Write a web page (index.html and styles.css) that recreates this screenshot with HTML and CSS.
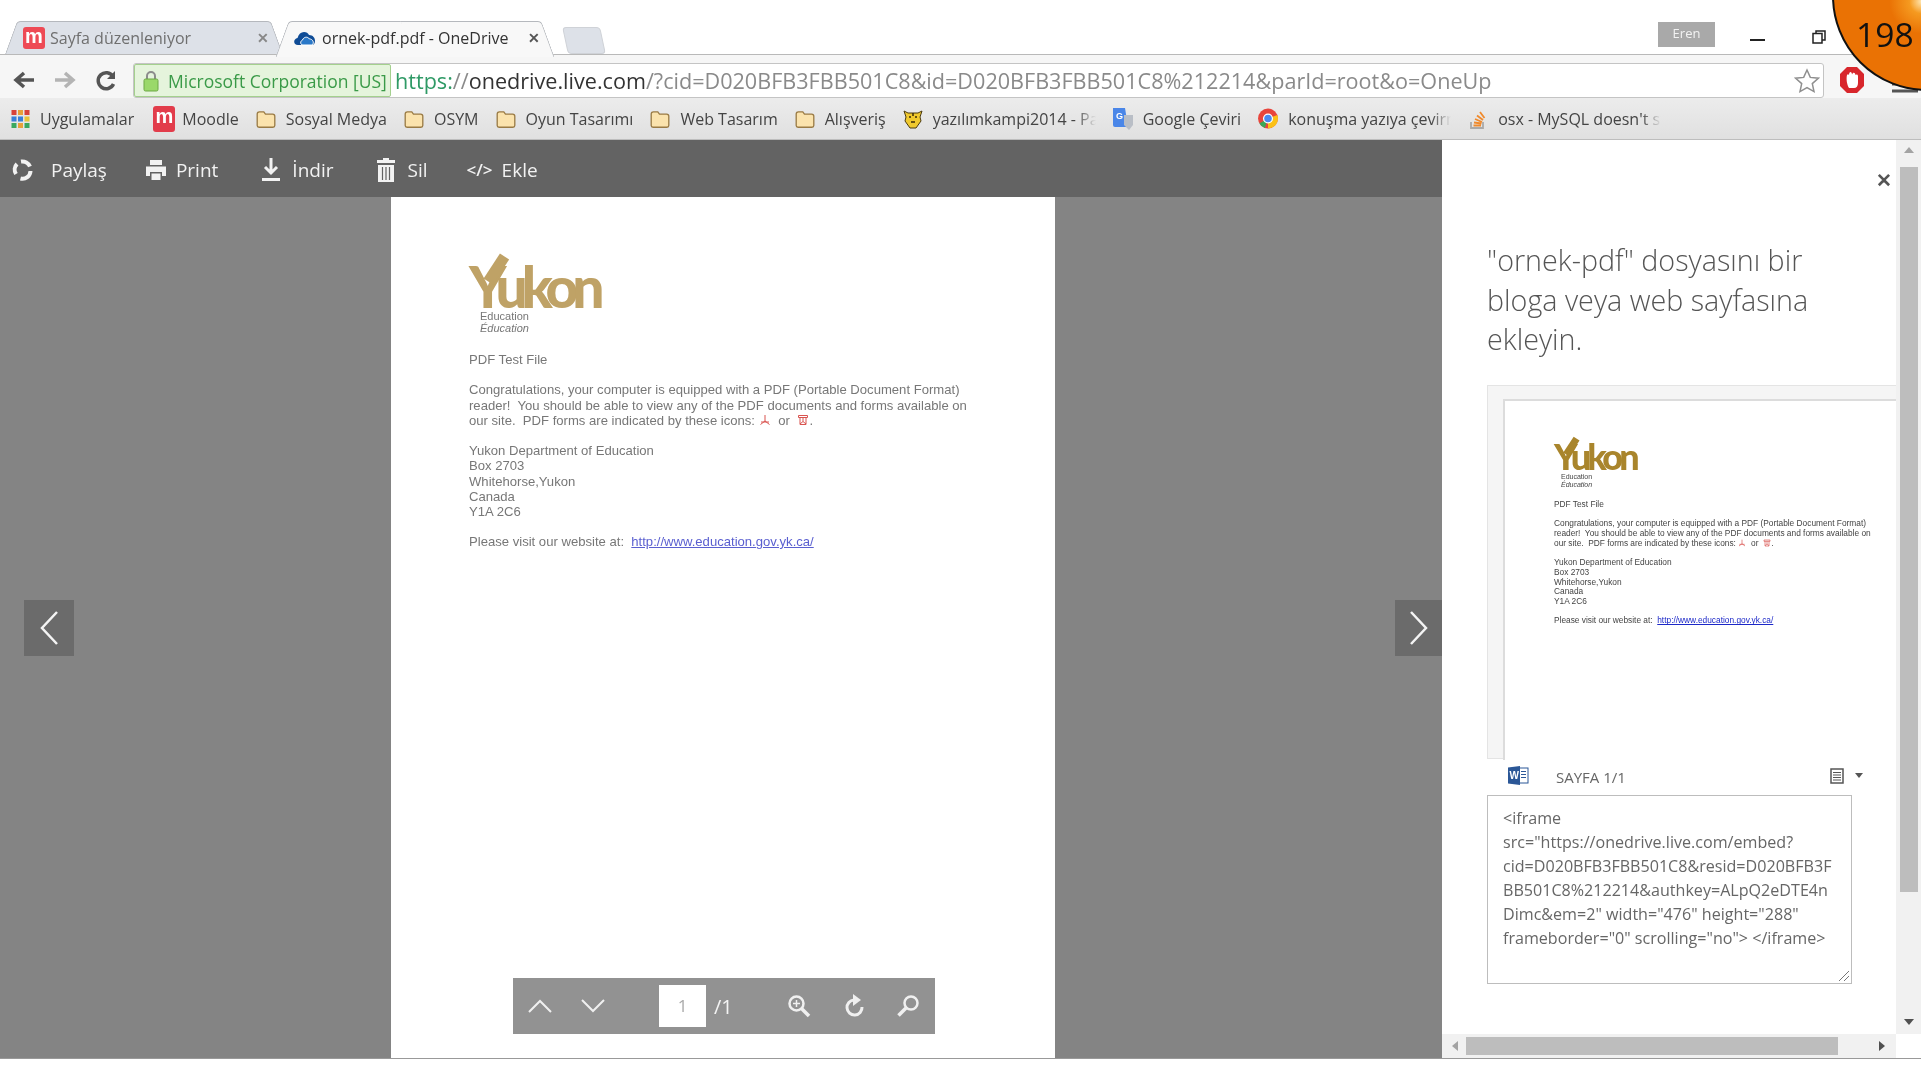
FILE: index.html
```html
<!DOCTYPE html>
<html lang="tr">
  <head>
    <meta charset="utf-8">
    <title>ornek-pdf.pdf - OneDrive</title>
    <link rel="stylesheet" href="styles.css">
  </head>
  <body>
    <svg class="defs" width="0" height="0">
      <symbol id="folder" viewBox="0 0 20 20">
        <path d="M2 5.500C2 4 3 3.500 4 3.500h4l1.500 2H16c1.200 0 2 .8 2 2V16c0 1-.8 1.500-1.700 1.500H3.700C2.800 17.500 2 17 2 16z" fill="#fbe3ad" stroke="#9a7b45" stroke-width="1.200"/>
      </symbol>
      <symbol id="yukon-pdf" viewBox="0 0 12 12">
        <path d="M6 1v6L1.500 10.500M6 7l4.500 3.500M2 8h8" fill="none" stroke="#d9534f" stroke-width="1"/>
      </symbol>
      <symbol id="form-pdf" viewBox="0 0 12 12">
        <path d="M1.500 1.500h9v2h-9zM3 3.500v7h6v-7M6 3.500v4L3 10M6 7.500l3 2.500" fill="none" stroke="#d9534f" stroke-width="1"/>
      </symbol>
    </svg>

    <div class="tabstrip">
      <div class="tab">
        <span class="fav-m">m</span>
        <span class="tab-title">Sayfa düzenleniyor</span>
        <span class="tab-x">✕</span>
      </div>
      <div class="tab tab-on">
        <svg class="tab-ico" width="22" height="16" viewBox="0 0 22 16"><path d="M4 15c-5 0-5-6-.5-7C4.500 4 7 2 10 2c2.500 0 4 1 5 3 4 0 6 3 6 6 0 2-1 4-3 4z" fill="#0f4c96"/><path d="M9 15c-3 0-3-4-.5-5 1-3 5-4 7-1 3 0 5 3 3 6z" fill="#2a78c8" stroke="#fff" stroke-width="1"/></svg>
        <span class="tab-title">ornek-pdf.pdf - OneDrive</span>
        <span class="tab-x">✕</span>
      </div>
      <div class="tab-new"></div>
      <div class="winctl">
        <span class="user">Eren</span>
        <span class="win-min"></span>
        <svg class="win-max" width="14" height="14" viewBox="0 0 14 14"><path d="M4 3V1h9v9h-3M1 3.500h9v9.500H1z" fill="none" stroke="#222" stroke-width="1.500"/></svg>
      </div>
    </div>

    <div class="toolbar">
      <svg class="nav-ico" width="24" height="22" viewBox="0 0 24 22"><path d="M22 11H6M12 4l-8 7 8 7" fill="none" stroke="#555" stroke-width="3.500"/></svg>
      <svg class="nav-ico" width="24" height="22" viewBox="0 0 24 22"><path d="M2 11h16M12 4l8 7-8 7" fill="none" stroke="#b4b4b4" stroke-width="3.500"/></svg>
      <svg class="nav-ico" width="24" height="24" viewBox="0 0 24 24"><path d="M19.500 15a8 8 0 1 1-.5-7.500" fill="none" stroke="#555" stroke-width="3.500"/><path d="M21 2v8h-8z" fill="#555"/></svg>
      <div class="omnibox">
        <div class="ev-chip">
          <svg width="16" height="22" viewBox="0 0 16 22"><path d="M4 10V6a4 4 0 0 1 8 0v4" fill="none" stroke="#8c8c8c" stroke-width="2"/><rect x="1" y="9" width="14" height="12" rx="1.500" fill="#9ad86a" stroke="#6da844"/></svg>
          <span>Microsoft Corporation [US]</span>
        </div>
        <div class="url"><span class="url-s">https:</span><span class="url-p">//</span><span class="url-h">onedrive.live.com</span><span class="url-p">/?cid=D020BFB3FBB501C8&amp;id=D020BFB3FBB501C8%212214&amp;parId=root&amp;o=OneUp</span></div>
        <svg class="star" width="26" height="26" viewBox="0 0 26 26"><path d="M13 2l3.300 7.400 8 .8-6 5.400 1.700 8L13 19.500 6 23.600l1.700-8-6-5.400 8-.8z" fill="#fff" stroke="#8f8f8f" stroke-width="1.500"/></svg>
      </div>
      <svg class="stop" width="26" height="28" viewBox="0 0 26 28"><path d="M8 1h10l7 7v12l-7 7H8l-7-7V8z" fill="#d8262c"/><path d="M10 22c-2-3-3-9-2-13 .5-1 1.500-1 2 0 0-4 3-4 3-.5 1-3 3.500-2 3.500 .5 1-1 2.500-.5 2.500 1V17c0 3-1.500 5-4 5z" fill="#fff"/></svg>
      <svg class="burger" width="26" height="20" viewBox="0 0 26 20"><path d="M0 3h26M0 10h26M0 17h26" stroke="#555" stroke-width="3"/></svg>
    </div>

    <div class="bookmarks">
      <span class="bm">
        <svg width="21" height="20" viewBox="0 0 20 20"><rect x="1" y="1" width="5" height="5" fill="#d8433a"/><rect x="7.500" y="1" width="5" height="5" fill="#e8a13a"/><rect x="14" y="1" width="5" height="5" fill="#d8433a"/><rect x="1" y="7.500" width="5" height="5" fill="#3a7fd8"/><rect x="7.500" y="7.500" width="5" height="5" fill="#3a7fd8"/><rect x="14" y="7.500" width="5" height="5" fill="#e8c33a"/><rect x="1" y="14" width="5" height="5" fill="#3aa860"/><rect x="7.500" y="14" width="5" height="5" fill="#e8a13a"/><rect x="14" y="14" width="5" height="5" fill="#3aa860"/></svg>
        Uygulamalar
      </span>
      <span class="bm bm-moodle"><span class="fav-m fav-big">m</span>Moodle</span>
      <span class="bm"><svg width="22" height="22"><use href="#folder"/></svg>Sosyal Medya</span>
      <span class="bm"><svg width="22" height="22"><use href="#folder"/></svg>OSYM</span>
      <span class="bm"><svg width="22" height="22"><use href="#folder"/></svg>Oyun Tasarımı</span>
      <span class="bm"><svg width="22" height="22"><use href="#folder"/></svg>Web Tasarım</span>
      <span class="bm"><svg width="22" height="22"><use href="#folder"/></svg>Alışveriş</span>
      <span class="bm">
        <svg width="22" height="20" viewBox="0 0 20 20"><path d="M1 2l4 2h10l4-2-2 6 1 4-5 7H7l-5-7 1-4z" fill="#f0c92e" stroke="#4a3a10"/><path d="M6 8h2M12 8h2M8 13h4M10 4v3" stroke="#3a2a08" stroke-width="1.500"/></svg>
        <span class="bm-cut">yazılımkampi2014 - Pardus</span>
      </span>
      <span class="bm">
        <svg width="22" height="24" viewBox="0 0 22 24"><path d="M1 1h12l3 19H3a2 2 0 0 1-2-2z" fill="#4a86e8"/><path d="M12 8h9v10l-4 5-5-5z" fill="#b9bec6"/><text x="4" y="12" font-size="9" font-weight="700" fill="#fff" font-family="Liberation Sans, sans-serif">G</text></svg>
        Google Çeviri
      </span>
      <span class="bm">
        <svg width="22" height="21" viewBox="0 0 20 20"><circle cx="10" cy="10" r="9.500" fill="#e8453c"/><path d="M10 10l8.900-3.300a9.500 9.500 0 0 1-8.900 12.800z" fill="#fbc116"/><path d="M10 10L1.800 14.800A9.500 9.500 0 0 0 7 19z" fill="#3aa757"/><circle cx="10" cy="10" r="4.800" fill="#fff"/><circle cx="10" cy="10" r="3.600" fill="#4a8af0"/></svg>
        <span class="bm-cut">konuşma yazıya çevirme</span>
      </span>
      <span class="bm">
        <svg width="22" height="24" viewBox="0 0 20 24"><path d="M3 15v6h12v-6" fill="none" stroke="#a9a9a9" stroke-width="1.800"/><path d="M5.500 18.500h7.500M6 15.500l7.500 1M7 12l7 3M9 8.500l6 4.500M12 5l4.500 6" fill="none" stroke="#f08a2c" stroke-width="1.800"/></svg>
        <span class="bm-cut">osx - MySQL doesn't start</span>
      </span>
    </div>

    <div class="app">
      <div class="viewer">
        <div class="actions">
          <span class="act act-share">
            <svg width="24" height="24" viewBox="0 0 24 24"><path d="M5 16a8 8 0 0 1 1-10M10 3.500a8.500 8.500 0 0 1 9 5M19.500 13a8 8 0 0 1-10 7.500" fill="none" stroke="#f2f2f2" stroke-width="4"/></svg>
            Paylaş
          </span>
          <span class="act act-print">
            <svg width="24" height="24" viewBox="0 0 24 24"><path d="M6 2h12v5H6zM2 8.500h20V18h-4v-4H6v4H2zM7.500 15.500h9V22h-9z" fill="#f2f2f2"/></svg>
            Print
          </span>
          <span class="act act-down">
            <svg width="22" height="26" viewBox="0 0 22 26"><path d="M11 1v14M5 10l6 6 6-6" fill="none" stroke="#f2f2f2" stroke-width="3"/><path d="M2 21h18v3H2z" fill="#f2f2f2"/></svg>
            İndir
          </span>
          <span class="act act-del">
            <svg width="20" height="26" viewBox="0 0 20 26"><path d="M7 1h6v2h6v3H1V3h6zM2 8h16v17H2z" fill="#f2f2f2"/><path d="M6.500 10v13M10 10v13M13.500 10v13" stroke="#636363" stroke-width="1.200"/></svg>
            Sil
          </span>
          <span class="act act-embed"><b class="code-tag">&lt;/&gt;</b>Ekle</span>
        </div>
        <div class="stage">
          <div class="sheet">
            <div class="doc doc-big">
              <div class="logo"><span class="logo-mark">Yukon</span></div>
              <p class="logo-sub">Education<br><i>Éducation</i></p>
              <p>PDF Test File</p>
              <p>Congratulations, your computer is equipped with a PDF (Portable Document Format)<br>reader!&nbsp; You should be able to view any of the PDF documents and forms available on<br>our site.&nbsp; PDF forms are indicated by these icons: <svg class="pdf-ico"><use href="#yukon-pdf"/></svg> or <svg class="pdf-ico"><use href="#form-pdf"/></svg>.</p>
              <p>Yukon Department of Education<br>Box 2703<br>Whitehorse,Yukon<br>Canada<br>Y1A 2C6</p>
              <p>Please visit our website at:&nbsp; <a>http://www.education.gov.yk.ca/</a></p>
            </div>
          </div>
          <div class="flip flip-prev"><svg width="20" height="36" viewBox="0 0 20 36"><path d="M18 2L3 18l15 16" fill="none" stroke="#f4f4f4" stroke-width="2.500"/></svg></div>
          <div class="flip flip-next"><svg width="20" height="36" viewBox="0 0 20 36"><path d="M2 2l15 16L2 34" fill="none" stroke="#f4f4f4" stroke-width="2.500"/></svg></div>
          <div class="pager">
            <svg class="pg-up" width="24" height="14" viewBox="0 0 24 14"><path d="M1 13L12 2l11 11" fill="none" stroke="#f0f0f0" stroke-width="2"/></svg>
            <svg class="pg-down" width="24" height="14" viewBox="0 0 24 14"><path d="M1 1l11 11L23 1" fill="none" stroke="#f0f0f0" stroke-width="2"/></svg>
            <span class="pg-num">1</span>
            <span class="pg-total">/1</span>
            <svg class="pg-zoom" width="24" height="24" viewBox="0 0 24 24"><circle cx="9.500" cy="9.500" r="7" fill="none" stroke="#f0f0f0" stroke-width="2.500"/><path d="M14.500 14.500L22 22" stroke="#f0f0f0" stroke-width="3.500"/><path d="M6 9.500h7M9.500 6v7" stroke="#f0f0f0" stroke-width="1.500"/></svg>
            <svg class="pg-rot" width="22" height="24" viewBox="0 0 22 24"><path d="M18 13A7.500 7.500 0 1 1 10 6" fill="none" stroke="#f0f0f0" stroke-width="3"/><path d="M9 0l8 6-8 6z" fill="#f0f0f0"/></svg>
            <svg class="pg-find" width="24" height="24" viewBox="0 0 24 24"><circle cx="15" cy="9" r="6.500" fill="none" stroke="#f0f0f0" stroke-width="2.500"/><path d="M10 14l-7.500 7.500" stroke="#f0f0f0" stroke-width="3.500"/></svg>
          </div>
        </div>
      </div>

      <div class="panel">
        <div class="panel-main">
          <div class="panel-close">✕</div>
          <h2 class="panel-title">"ornek-pdf" dosyasını bir bloga veya web sayfasına ekleyin.</h2>
          <div class="preview">
            <div class="preview-page">
              <div class="doc doc-small">
                <div class="logo"><span class="logo-mark">Yukon</span></div>
                <p class="logo-sub">Education<br><i>Éducation</i></p>
                <p>PDF Test File</p>
                <p>Congratulations, your computer is equipped with a PDF (Portable Document Format)<br>reader!&nbsp; You should be able to view any of the PDF documents and forms available on<br>our site.&nbsp; PDF forms are indicated by these icons: <svg class="pdf-ico"><use href="#yukon-pdf"/></svg> or <svg class="pdf-ico"><use href="#form-pdf"/></svg>.</p>
                <p>Yukon Department of Education<br>Box 2703<br>Whitehorse,Yukon<br>Canada<br>Y1A 2C6</p>
                <p>Please visit our website at:&nbsp; <a>http://www.education.gov.yk.ca/</a></p>
              </div>
            </div>
          </div>
          <div class="preview-bar">
            <svg class="word" width="21" height="19" viewBox="0 0 21 19"><rect x="7" y="2" width="13" height="15" fill="#fff" stroke="#2b5797"/><path d="M13 5.500h5M13 8.500h5M13 11.500h5" stroke="#2b5797"/><path d="M0 1.500L12 0v19L0 17.500z" fill="#2b5797"/><text x="1.500" y="13" font-size="10" font-weight="700" fill="#fff" font-family="Liberation Sans, sans-serif">W</text></svg>
            <span class="page-label">SAYFA 1/1</span>
            <svg class="page-mode" width="14" height="16" viewBox="0 0 14 16"><rect x="1" y="1" width="12" height="14" fill="none" stroke="#555" stroke-width="1.500"/><path d="M3 4.500h8M3 7h8M3 9.500h8M3 12h8" stroke="#555" stroke-width="1.200"/></svg>
            <span class="caret"></span>
          </div>
          <div class="embed-box">
            <div class="embed-code">&lt;iframe<br>src="https://onedrive.live.com/embed?<br>cid=D020BFB3FBB501C8&amp;resid=D020BFB3F<br>BB501C8%212214&amp;authkey=ALpQ2eDTE4n<br>Dimc&amp;em=2" width="476" height="288"<br>frameborder="0" scrolling="no"&gt; &lt;/iframe&gt;</div>
            <svg class="grip" width="12" height="12" viewBox="0 0 12 12"><path d="M11 1L1 11M11 6l-5 5" stroke="#777"/></svg>
          </div>
        </div>
        <div class="vscroll">
          <span class="arrow arrow-up"></span>
          <span class="vthumb"></span>
          <span class="arrow arrow-down"></span>
        </div>
        <div class="hscroll">
          <span class="arrow arrow-left"></span>
          <span class="hthumb"></span>
          <span class="arrow arrow-right"></span>
        </div>
      </div>
    </div>

    <div class="badge">198</div>
  </body>
</html>
```
FILE: styles.css
```css
html, body {
    margin: 0;
    padding: 0;
    background: #fff;
}

body {
    position: relative;
    width: 1921px;
    height: 1080px;
    overflow: hidden;
    font-family: "Open Sans", "Noto Sans", sans-serif;
    color: #333;
    filter: blur(0.55px);
}

.defs {
    position: absolute;
}

svg {
    flex: none;
    display: block;
}

/* tabs */

.tabstrip {
    height: 55px;
    box-sizing: border-box;
    padding: 21px 0 0 17px;
    display: flex;
    align-items: stretch;
    gap: 17px;
    border-bottom: 1px solid #b9b9b9;
}

.tab {
    position: relative;
    width: 254px;
    box-sizing: border-box;
    padding: 0 2px 0 6px;
    display: flex;
    align-items: center;
    font-size: 16px;
    color: #6f6f6f;
    z-index: 0;
}

.tab::before, .tab::after {
    content: "";
    position: absolute;
    top: 0;
    bottom: 0;
    width: 55%;
    background: #dde1e8;
    border: 1px solid #b5b8bd;
    border-bottom: 0;
    z-index: -1;
}

.tab::before {
    left: -6px;
    border-right: 0;
    border-top-left-radius: 4px;
    transform: skewX(-20deg);
}

.tab::after {
    right: -6px;
    border-left: 0;
    border-top-right-radius: 4px;
    transform: skewX(20deg);
}

.tab-on {
    color: #333;
    padding-left: 6px;
}

.tab-on::before, .tab-on::after {
    background: #f8f8f8;
    height: 35px;
}

.tab-ico {
    margin-right: 6px;
}

.tab-title {
    flex: 1;
    white-space: nowrap;
}

.tab-x {
    font-size: 14px;
    font-weight: 700;
    color: #888;
}

.tab-on .tab-x {
    color: #555;
}

.fav-m {
    width: 22px;
    height: 22px;
    margin-right: 5px;
    border-radius: 3px;
    background: #ee4a55;
    color: #fff;
    font-family: "Liberation Sans", sans-serif;
    font-size: 20px;
    font-weight: 700;
    line-height: 18px;
    text-align: center;
    flex: none;
}

.fav-big {
    height: 26px;
    line-height: 21px;
    margin-right: 7px;
    background: #e23c4b;
}

.tab-new {
    width: 36px;
    height: 25px;
    margin: 6px 0 0 6px;
    background: #dde1e8;
    border: 1px solid #cfd2d7;
    border-radius: 4px;
    transform: skewX(12deg);
}

.winctl {
    margin-left: auto;
    display: flex;
    align-items: flex-start;
}

.user {
    width: 57px;
    height: 25px;
    margin-top: 1px;
    background: #a9a9a9;
    color: #f2f2f2;
    font-size: 13px;
    line-height: 22px;
    text-align: center;
}

.win-min {
    width: 15px;
    height: 2px;
    margin: 18px 0 0 35px;
    background: #222;
}

.win-max {
    margin: 9px 95px 0 47px;
}

/* toolbar */

.toolbar {
    height: 43px;
    box-sizing: border-box;
    padding: 8px 0 0 12px;
    display: flex;
    align-items: flex-start;
    background: #f6f6f6;
}

.nav-ico {
    margin: 6px 17px 0 0;
}

.omnibox {
    width: 1691px;
    height: 35px;
    margin-left: -2px;
    box-sizing: border-box;
    display: flex;
    align-items: center;
    background: #fff;
    border: 1px solid #c4c4c4;
    border-radius: 3px;
}

.ev-chip {
    width: 257px;
    height: 33px;
    box-sizing: border-box;
    padding-left: 8px;
    display: flex;
    align-items: center;
    gap: 9px;
    background: #e5f4dc;
    border: 1px solid #a4d08e;
    border-radius: 2px;
    color: #3a9a48;
    font-size: 17.500px;
    white-space: nowrap;
}

.url {
    margin-left: 4px;
    flex: 1;
    font-size: 21.600px;
    color: #8a8a8a;
    white-space: nowrap;
}

.url-s {
    color: #2f9a66;
}

.url-h {
    color: #333;
}

.star {
    margin-right: 3px;
}

.stop {
    margin: 3px 0 0 15px;
}

.burger {
    margin: 11px 0 0 27px;
}

/* bookmarks */

.bookmarks {
    height: 42px;
    box-sizing: border-box;
    padding: 0 0 0 10px;
    display: flex;
    align-items: center;
    gap: 16px;
    background: linear-gradient(#ececec, #e0e0e0);
    border-bottom: 1px solid #bdbdbd;
    font-size: 16px;
    color: #444;
    white-space: nowrap;
}

.bm {
    display: flex;
    align-items: center;
    gap: 9px;
}

.bm-moodle {
    gap: 0;
    margin-left: 3px;
}

.bm-cut {
    display: block;
    width: 163px;
    overflow: hidden;
    -webkit-mask-image: linear-gradient(to right, #000 88%, transparent);
    mask-image: linear-gradient(to right, #000 88%, transparent);
}

/* main area */

.app {
    display: flex;
    height: 918px;
    border-bottom: 1px solid #999;
}

.viewer {
    width: 1442px;
    display: flex;
    flex-direction: column;
}

.actions {
    height: 57px;
    flex: none;
    box-sizing: border-box;
    padding-top: 2px;
    display: flex;
    align-items: center;
    background: #636363;
    color: #f2f2f2;
    font-size: 19px;
}

.act {
    display: flex;
    align-items: center;
}

.act-share {
    margin-left: 11px;
    gap: 16px;
}

.act-print {
    margin-left: 37px;
    gap: 8px;
}

.act-down {
    margin-left: 42px;
    gap: 10px;
}

.act-del {
    margin-left: 42px;
    gap: 12px;
}

.act-embed {
    margin-left: 39px;
    gap: 9px;
}

.code-tag {
    font-size: 17px;
    font-weight: 600;
}

.stage {
    position: relative;
    flex: 1;
    padding-left: 391px;
    background: #848484;
}

.sheet {
    width: 664px;
    height: 100%;
    background: #fff;
}

.doc {
    font-family: "Liberation Sans", sans-serif;
    white-space: nowrap;
}

.doc p {
    margin: 0;
}

.doc a {
    text-decoration: underline;
}

.doc-big {
    padding: 61px 0 0 78px;
    font-size: 13.100px;
    line-height: 15.200px;
    color: #777;
}

.doc-big p {
    margin-bottom: 15.200px;
}

.doc-big a {
    color: #5a5fd0;
}

.doc-big .logo {
    height: 52px;
}

.doc-big .logo-mark {
    font-size: 57px;
    line-height: 56px;
    letter-spacing: -6px;
    color: #bfa266;
}

.doc-big .logo-sub {
    margin: 0 0 18px 11px;
    font-size: 11px;
    line-height: 12px;
}

.doc-big .pdf-ico {
    width: 12px;
    height: 12px;
}

.doc-small {
    padding: 39px 0 0 49px;
    font-size: 8.330px;
    line-height: 9.700px;
    color: #444;
}

.doc-small p {
    margin-bottom: 9.700px;
}

.doc-small a {
    color: #1c28c8;
}

.doc-small .logo {
    height: 33px;
}

.doc-small .logo-mark {
    font-size: 36px;
    line-height: 33px;
    letter-spacing: -3.800px;
    color: #a9852c;
}

.doc-small .logo-sub {
    margin: 0 0 12px 7px;
    font-size: 7px;
    line-height: 7.500px;
}

.doc-small .pdf-ico {
    width: 8px;
    height: 8px;
}

.logo-mark {
    position: relative;
    display: block;
    font-family: Lato, sans-serif;
    font-weight: 900;
}

/* long arm of the Y */
.logo-mark::after {
    content: "";
    position: absolute;
    left: 0.39em;
    top: -0.07em;
    width: 0.19em;
    height: 0.52em;
    background: currentColor;
    transform: rotate(33deg);
}

.pdf-ico {
    display: inline-block;
    vertical-align: -1px;
    margin: 0 0.3em 0 0;
}

.pdf-ico + .pdf-ico {
    margin: 0 0 0 0.3em;
}

.flip {
    position: absolute;
    top: 403px;
    width: 50px;
    height: 56px;
    display: flex;
    align-items: center;
    justify-content: center;
    background: #6b6b6b;
}

.flip-prev {
    left: 24px;
}

.flip-next {
    right: 0;
    width: 47px;
}

.pager {
    position: absolute;
    left: 513px;
    top: 781px;
    width: 422px;
    height: 56px;
    display: flex;
    align-items: center;
    background: #929292;
    color: #f4f4f4;
}

.pg-up {
    margin-left: 15px;
}

.pg-down {
    margin-left: 29px;
}

.pg-num {
    width: 47px;
    height: 42px;
    margin-left: 54px;
    background: #fff;
    color: #aaa;
    font-size: 17px;
    line-height: 42px;
    text-align: center;
}

.pg-total {
    margin-left: 8px;
    font-size: 20px;
}

.pg-zoom {
    margin-left: 54px;
}

.pg-rot {
    margin-left: 33px;
}

.pg-find {
    margin-left: 30px;
}

/* embed panel */

.panel {
    width: 479px;
    display: grid;
    grid-template-columns: 454px 25px;
    grid-template-rows: 1fr 24px;
}

.panel-main {
    position: relative;
    padding: 0 0 0 45px;
    overflow: hidden;
}

.panel-close {
    position: absolute;
    right: 4px;
    top: 27px;
    font-size: 19px;
    font-weight: 700;
    color: #555;
}

.panel-title {
    width: 345px;
    height: 245px;
    margin: 0;
    box-sizing: border-box;
    padding-top: 100px;
    font-size: 28.700px;
    font-weight: 300;
    line-height: 39.500px;
    color: #555;
}

.preview {
    width: 409px;
    height: 374px;
    box-sizing: border-box;
    padding: 13px 0 0 15px;
    background: #f5f5f5;
    border: 1px solid #e4e4e4;
    border-right: 0;
}

.preview-page {
    height: 100%;
    background: #fff;
    border: 2px solid #dcdcdc;
    border-width: 2px 0 0 2px;
}

.preview-bar {
    width: 409px;
    height: 36px;
    box-sizing: border-box;
    display: flex;
    align-items: center;
    padding: 0 33px 0 21px;
}

.word {
    margin-bottom: 3px;
}

.page-label {
    margin-left: 27px;
    font-size: 15px;
    color: #666;
    white-space: nowrap;
}

.page-mode {
    margin: 0 0 3px auto;
}

.caret {
    width: 0;
    height: 0;
    margin: 0 0 3px 11px;
    border: 4px solid transparent;
    border-top: 5px solid #555;
    border-bottom: 0;
}

.embed-box {
    position: relative;
    width: 365px;
    height: 189px;
    box-sizing: border-box;
    padding: 10px 0 0 15px;
    border: 1px solid #bdbdbd;
}

.embed-code {
    font-size: 16.100px;
    line-height: 24px;
    color: #666;
    white-space: nowrap;
}

.grip {
    position: absolute;
    right: 1px;
    bottom: 1px;
}

.vscroll {
    display: flex;
    flex-direction: column;
    align-items: center;
    background: #f1f1f1;
}

.vthumb {
    width: 18px;
    height: 725px;
    margin-top: 14px;
    background: #bdbdbd;
}

.arrow {
    width: 0;
    height: 0;
    border: 5px solid transparent;
    flex: none;
}

.arrow-up {
    margin-top: 7px;
    border-top: 0;
    border-bottom: 6px solid #a3a3a3;
}

.arrow-down {
    margin-top: auto;
    margin-bottom: 9px;
    border-bottom: 0;
    border-top: 6px solid #505050;
}

.hscroll {
    grid-column: 1;
    display: flex;
    align-items: center;
    background: #f1f1f1;
    padding-left: 10px;
}

.hthumb {
    width: 372px;
    height: 18px;
    margin-left: 8px;
    background: #bdbdbd;
}

.arrow-left {
    border-left: 0;
    border-right: 6px solid #a3a3a3;
}

.arrow-right {
    margin-left: 41px;
    border-right: 0;
    border-left: 6px solid #505050;
}

/* screen recording counter */

.badge {
    position: absolute;
    left: 1832px;
    top: -99px;
    width: 190px;
    height: 190px;
    box-sizing: border-box;
    padding: 107px 0 0 22px;
    border: 2px solid #111;
    border-radius: 50%;
    background: radial-gradient(circle at 47% 53%, #ffe6b0 0, #f59a20 12px, #ea7204 32px);
    color: #111;
    font-size: 33.600px;
    line-height: 48px;
}
```
